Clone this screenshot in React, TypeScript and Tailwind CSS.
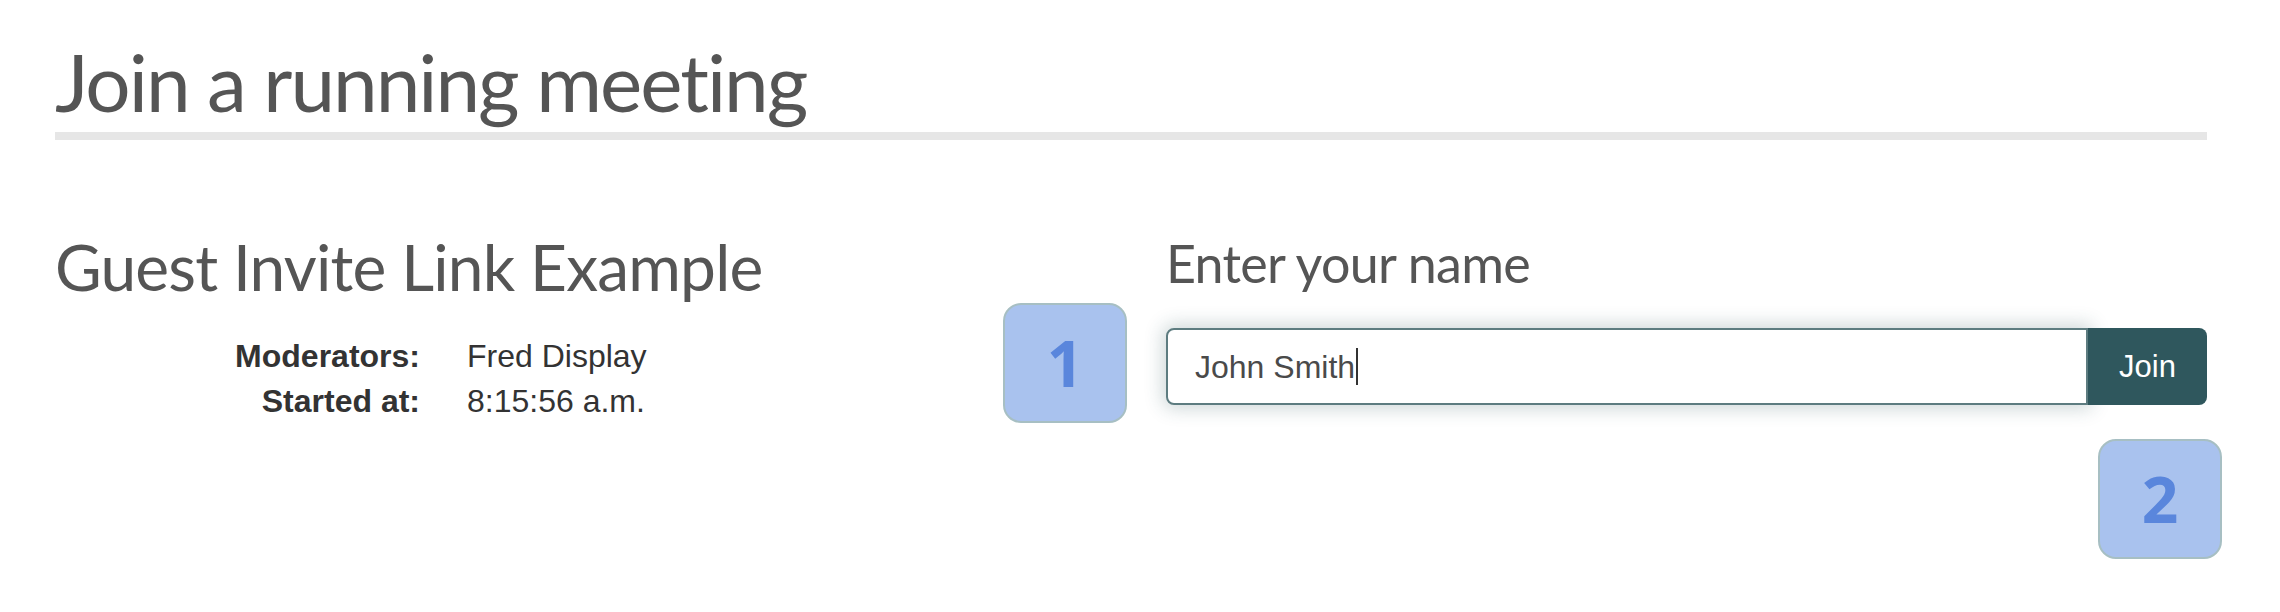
const details = [
  { label: 'Moderators:', value: 'Fred Display' },
  { label: 'Started at:', value: '8:15:56 a.m.' },
];

function StepBadge({ n, className }: { n: number; className: string }) {
  return (
    <div
      className={`absolute flex h-[120px] w-[124px] items-center justify-center rounded-[18px] border-2 border-[#a7bfc3] bg-[#a9c2ee] font-['Open_Sans',sans-serif] text-[64px] font-bold leading-none text-[#5a86dc] ${className}`}
    >
      {n}
    </div>
  );
}

export default function App() {
  return (
    <div className="h-[612px] w-[2280px] overflow-hidden bg-white pl-[55px] pr-[73px] pt-[33px]">
      {/* Page heading */}
      <h1 className="border-b-[8px] border-[#e6e6e6] pb-[3px] font-['Lato',sans-serif] text-[80px] font-normal leading-[96px] tracking-[-2px] text-[#555555] [font-variant-ligatures:none]">
        Join a running meeting
      </h1>

      <div className="mt-[89px] flex">
        {/* Meeting info */}
        <div className="w-[1111px]">
          <h2 className="font-['Lato',sans-serif] text-[64px] font-normal leading-[1.2] tracking-[-0.8px] text-[#555555]">
            Guest Invite Link Example
          </h2>
          <table className="mt-[28px] font-['Liberation_Sans',Arial,sans-serif] text-[32px] leading-[45px] text-[#333333]">
            <tbody>
              {details.map((row) => (
                <tr key={row.label}>
                  <th className="w-[412px] pr-[47px] text-right font-bold">{row.label}</th>
                  <td className="font-normal">{row.value}</td>
                </tr>
              ))}
            </tbody>
          </table>
        </div>

        {/* Join form */}
        <div className="flex-1">
          <h3 className="mt-[3px] font-['Lato',sans-serif] text-[52px] font-normal leading-[1.2] tracking-[-0.7px] text-[#555555]">
            Enter your name
          </h3>
          <div className="relative mt-[34px] flex h-[77px]">
            <div className="flex flex-1 items-center rounded-l-[8px] border-2 border-[#5d7c80] bg-white pl-[27px] font-['Liberation_Sans',Arial,sans-serif] text-[32px] text-[#4a4a4a] shadow-[0_0_18px_4px_rgba(40,80,85,0.22)]">
              <span>John Smith</span>
              <span className="ml-[1px] h-[37px] w-[2px] bg-[#333333]" />
            </div>
            <button className="w-[119px] rounded-r-[8px] bg-[#2f575d] font-['Liberation_Sans',Arial,sans-serif] text-[31px] text-white">
              Join
            </button>
            <StepBadge n={1} className="left-[-163px] top-[-25px]" />
            <StepBadge n={2} className="left-[932px] top-[111px]" />
          </div>
        </div>
      </div>
    </div>
  );
}
